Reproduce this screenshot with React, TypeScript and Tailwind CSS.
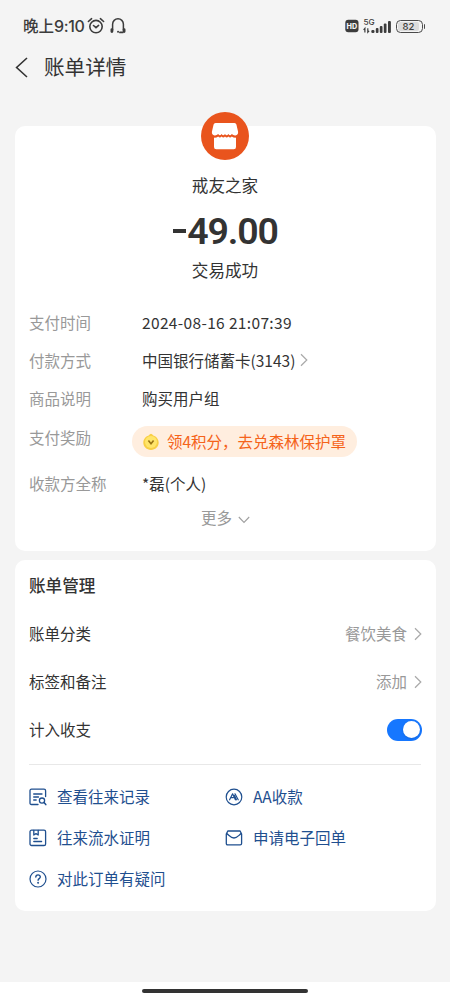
import React, { useState } from 'react';

interface DetailRowProps {
  label: string;
  children: React.ReactNode;
}

const DetailRow: React.FC<DetailRowProps> = ({ label, children }) => (
  <div className="flex h-[38px] items-center pb-[2px]">
    <span className="w-[113px] shrink-0 text-[#999999]">{label}</span>
    <div className="flex items-center">{children}</div>
  </div>
);

const ChevronRight = () => (
  <svg width="8" height="14" viewBox="0 0 8 14" fill="none" stroke="#a9a9a9" strokeWidth="1.2">
    <path d="M1 1.3L6.8 7L1 12.7" />
  </svg>
);

const StatusBar = () => (
  <div className="flex h-[52px] items-center justify-between pl-[23px] pr-[25px] text-[#3c3c3c]">
    <div className="flex items-center">
      <span className="w-[62px] whitespace-nowrap pb-[1px] text-[15.5px] font-medium">
        晚上<span className="font-[Inter] text-[16px] tracking-[-0.4px]">9:10</span>
      </span>
      <svg className="ml-[2px]" width="18" height="18" viewBox="0 0 18 18" fill="none" stroke="#3c3c3c" strokeWidth="1.6" strokeLinecap="round">
        <circle cx="9" cy="9.6" r="6.2" />
        <path d="M1.4 4.5L4.6 1.7M16.6 4.5L13.4 1.7M6.5 8.5L9 10.6L11.6 8.4" />
      </svg>
      <svg className="ml-[4px]" width="18" height="18" viewBox="0 0 18 18" fill="none" stroke="#3c3c3c" strokeWidth="1.5" strokeLinecap="round">
        <path d="M3.6 13V7.2C3.6 4.2 6 1.8 9 1.8S14.4 4.2 14.4 7.2V13" />
        <path d="M2.9 12.6V14.6M15.1 12.6V14.6" strokeWidth="2.8" />
        <path d="M9 14.8H9.1M11 15.4H13.6" strokeWidth="1.9" />
      </svg>
    </div>
    <div className="flex items-center">
      <svg width="14" height="14" viewBox="0 0 14 14">
        <rect x="0.3" y="0.8" width="13.2" height="12.4" rx="3" fill="#3c3c3c" />
        <text x="6.9" y="9.6" textAnchor="middle" fontFamily="Inter" fontSize="7.2" fontWeight="800" fill="#f5f5f5">HD</text>
      </svg>
      <svg className="ml-[4px]" width="29" height="18" viewBox="0 0 29 18" fill="#3c3c3c">
        <text x="0.5" y="8" fontFamily="Inter" fontSize="8.2" fontWeight="500">5G</text>
        <path d="M1.9 15.5V11.4L0.6 12.8M4.8 11.2V15.2L6.1 13.8" fill="none" stroke="#3c3c3c" strokeWidth="1.2" />
        <rect x="8.3" y="13" width="3.2" height="3" rx="1.2" />
        <rect x="12.8" y="11" width="2.7" height="5" rx="1" />
        <rect x="16.8" y="9" width="2.7" height="7" rx="1" />
        <rect x="20.8" y="6.6" width="2.7" height="9.4" rx="1" />
        <rect x="25" y="4" width="2.9" height="12" rx="1" />
      </svg>
      <div className="ml-[4px] flex h-[13px] w-[27px] items-center rounded-[4.5px] border-[1.5px] border-[#4a4a4a] p-[1px]">
        <span className="flex h-full w-[21px] items-center justify-center rounded-[2px] bg-[#dcdcdc] pt-[1px] font-[Inter] text-[9.5px] font-medium">82</span>
      </div>
      <span className="ml-[0.5px] h-[5px] w-[1.5px] rounded-r bg-[#4a4a4a]" />
    </div>
  </div>
);

const RecordIcon = () => (
  <svg width="18" height="18" viewBox="0 0 18 18" fill="none" stroke="#1f4f8f" strokeWidth="1.3" strokeLinecap="round">
    <path d="M9 16.5H2.5Q1 16.5 1 15V2.8Q1 1.2 2.5 1.2H15Q16.6 1.2 16.6 2.8V8.5M4.7 6H13M4.7 9H9.5M4.7 12H7.2" />
    <circle cx="13" cy="12.6" r="2.6" />
    <path d="M15 14.6L16.8 16.6" strokeWidth="1.5" />
  </svg>
);

const ProofIcon = () => (
  <svg width="18" height="18" viewBox="0 0 18 18" fill="none" stroke="#1f4f8f" strokeWidth="1.3" strokeLinecap="round" strokeLinejoin="round">
    <rect x="1" y="1.2" width="15.6" height="15.3" rx="1.6" />
    <path d="M4.8 1.5V6L7 4.6L9.2 6V1.5M4.8 9.5H8.2M4.8 12.5H12.6" />
  </svg>
);

const QuestionIcon = () => (
  <svg width="18" height="18" viewBox="0 0 18 18" fill="none" stroke="#1f4f8f" strokeWidth="1.2" strokeLinecap="round">
    <circle cx="9" cy="9" r="8" />
    <path d="M6.8 7.1C6.8 4.1 11.4 4.2 11.3 7C11.2 8.6 9.1 8.6 9.1 10.3" strokeWidth="1.4" />
    <circle cx="9.1" cy="12.8" r="0.4" />
  </svg>
);

const SplitIcon = () => (
  <svg width="18" height="18" viewBox="0 0 18 18" fill="none" stroke="#1f4f8f" strokeWidth="1.2" strokeLinecap="round" strokeLinejoin="round">
    <circle cx="9" cy="9" r="7.8" />
    <path d="M4.6 11.8L7.6 5.8L10.4 11.8M6.3 9.7H8.2M10 5.8L13.2 11.8M9.4 7.4L11.4 11.8" />
  </svg>
);

const MailIcon = () => (
  <svg width="18" height="18" viewBox="0 0 18 18" fill="none" stroke="#1f4f8f" strokeWidth="1.3" strokeLinejoin="round">
    <path d="M1.3 5L2.8 2H15.1L16.6 5V14.5Q16.6 15.9 15.2 15.9H2.7Q1.3 15.9 1.3 14.5Z" />
    <path d="M1.5 4.4C4 6 5.6 9 9 9S13.8 6 16.4 4.4" />
  </svg>
);

const actions = [
  { label: '查看往来记录', icon: <RecordIcon /> },
  { label: 'AA收款', icon: <SplitIcon /> },
  { label: '往来流水证明', icon: <ProofIcon /> },
  { label: '申请电子回单', icon: <MailIcon /> },
  { label: '对此订单有疑问', icon: <QuestionIcon /> },
];

const BillSummary = () => (
  <section className="mx-[14.5px] mt-[44px] flex h-[424.5px] flex-col rounded-[10px] bg-white px-[14.5px]">
    <div className="-mt-[14px] flex size-12 items-center justify-center self-center rounded-full bg-[#e9541d]">
      <svg width="28" height="28" viewBox="0 0 28 28" fill="#fff">
        <path d="M4.5 1H23.5Q25 1 25.4 2.5L27.1 9.8Q27.4 13.2 24.4 13.4Q22.4 13.6 20.8 12Q19 14.6 17.4 12Q15.6 14.6 14 12Q12.2 14.6 10.6 12Q8.8 14.6 7.2 12Q5.6 13.6 3.6 13.4Q0.6 13.2 0.9 9.8L2.6 2.5Q3 1 4.5 1Z" />
        <path d="M3 15.6Q5.4 15.8 7.2 14.4Q8.8 16.6 10.6 14.4Q12.3 16.6 14 14.4Q15.7 16.6 17.4 14.4Q19.2 16.6 20.8 14.4Q22.6 15.8 25 15.6V25Q25 27.3 22.7 27.3H5.3Q3 27.3 3 25Z" />
      </svg>
    </div>
    <div className="mt-[11px] flex h-[27px] items-center justify-center text-[16.6px]">戒友之家</div>
    <div className="mt-[1px] flex h-[62px] items-center justify-center pt-[1px] font-[Roboto] text-[37.5px] font-semibold">
      <span className="mr-[1px] h-[4px] w-[13px] bg-[#333333]" />
      <span className="-mr-[1px] tracking-[-1.2px]">49.00</span>
    </div>
    <div className="mb-[25px] flex h-[18px] items-center justify-center text-[16.6px]">交易成功</div>
    <DetailRow label="支付时间">
      <span className="tracking-[0.35px]">2024-08-16 21:07:39</span>
    </DetailRow>
    <DetailRow label="付款方式">
      <span className="mr-[5px]">中国银行储蓄卡(3143)</span>
      <ChevronRight />
    </DetailRow>
    <DetailRow label="商品说明">购买用户组</DetailRow>
    <div className="flex h-[47px] items-start">
      <span className="mt-[7px] w-[103px] text-[#999999]">支付奖励</span>
      <div className="mt-[8px] flex h-[31px] w-[225px] items-center rounded-full bg-[#ffeedf] pl-[11px] text-[#f5631a]">
        <svg className="mr-[8px]" width="16" height="18" viewBox="0 0 16 18">
          <path d="M8 0.8Q9 0.8 10.3 2.4C13.5 3.5 15.7 6.2 15.7 9.6C15.7 13.9 12.3 17 8 17S0.3 13.9 0.3 9.6C0.3 6.2 2.5 3.5 5.7 2.4Q7 0.8 8 0.8Z" fill="#f8cf45" />
          <circle cx="8" cy="9" r="6" fill="#ffe56a" />
          <path d="M5.4 7.4L8 10.8L10.6 7.4" fill="none" stroke="#9a7414" strokeWidth="1.6" />
        </svg>
        <span className="pb-[2px]">领4积分，去兑森林保护罩</span>
      </div>
    </div>
    <DetailRow label="收款方全称">*磊(个人)</DetailRow>
    <button type="button" className="flex h-[30px] items-center justify-center pb-[2px] pl-[1px] text-[#999999]">
      更多
      <svg className="ml-[6px] mt-[6px]" width="12" height="8" viewBox="0 0 12 8" fill="none" stroke="#a0a0a0" strokeWidth="1.1">
        <path d="M0.8 1L6 6.4L11.2 1" />
      </svg>
    </button>
  </section>
);

const BillManagement = () => {
  const [counted, setCounted] = useState(true);

  return (
    <section className="mx-[14.5px] mt-[9.5px] flex h-[351px] flex-col rounded-[10px] bg-white px-[14.5px]">
      <h2 className="flex h-[50px] items-center text-[16.6px] font-medium">账单管理</h2>
      <div className="-mr-[1px] flex h-12 items-center justify-between">
        <span className="pb-[2px]">账单分类</span>
        <span className="flex items-center gap-[7px] text-[#999999]"><span className="pb-[2px]">餐饮美食</span><ChevronRight /></span>
      </div>
      <div className="-mr-[1px] flex h-12 items-center justify-between">
        <span className="pb-[2px]">标签和备注</span>
        <span className="flex items-center gap-[7px] text-[#999999]"><span className="pb-[2px]">添加</span><ChevronRight /></span>
      </div>
      <div className="-mr-[1px] flex h-[47px] items-center justify-between">
        <span className="pb-[2px]">计入收支</span>
        <button
          type="button"
          role="switch"
          aria-checked={counted}
          onClick={() => setCounted(!counted)}
          className={`flex h-[22px] w-[35px] items-center rounded-full px-[2px] ${counted ? 'justify-end bg-[#1677ff]' : 'justify-start bg-[#cccccc]'}`}
        >
          <span className="size-[17.5px] rounded-full bg-white shadow-sm" />
        </button>
      </div>
      <div className="mt-[11px] border-t border-[#e8e8e8]" />
      <div className="mt-[11.5px] grid grid-cols-2 text-[#1f4f8f]">
        {actions.map((action) => (
          <div key={action.label} className="-ml-[0.5px] flex h-[41px] items-center gap-[10.5px]">
            {action.icon}
            <span className="pb-[2px]">{action.label}</span>
          </div>
        ))}
      </div>
    </section>
  );
};

const App: React.FC = () => (
  <div className="flex h-[1000px] w-[450px] flex-col overflow-hidden bg-[#f4f4f4] font-['Noto_Sans_CJK_SC',sans-serif] text-[15.5px] leading-[24px] text-[#333333]">
    <StatusBar />
    <header className="flex h-[30px] items-center pl-[15px]">
      <svg width="13" height="21" viewBox="0 0 13 21" fill="none" stroke="#333" strokeWidth="1.6">
        <path d="M12 1L1.6 10.5L12 20" />
      </svg>
      <h1 className="ml-[16px] pb-[2px] text-[20.6px]">账单详情</h1>
    </header>
    <BillSummary />
    <BillManagement />
    <div className="mt-auto flex h-[18.5px] justify-center bg-white pt-[7.5px]">
      <span className="h-[4px] w-[166px] rounded-full bg-[#333333]" />
    </div>
  </div>
);

export default App;
